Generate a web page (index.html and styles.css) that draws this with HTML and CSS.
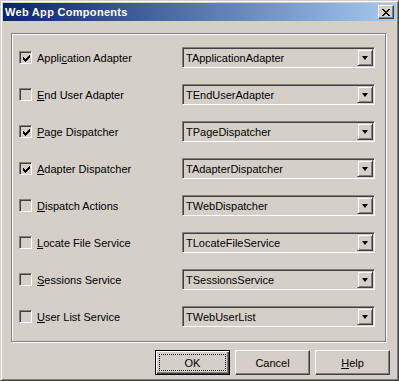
FILE: index.html
```html
<!DOCTYPE html>
<html>
	<head>
		<meta charset="utf-8">
		<title>Web App Components</title>
		<link rel="stylesheet" href="styles.css">
	</head>
	<body>
		<div class="window">
			<!-- 标题栏 -->
			<div class="titlebar">
				<span class="title">Web App Components</span>
				<span class="close">
					<svg width="8" height="7" viewBox="0 0 8 7" shape-rendering="crispEdges"><path d="M0 0h2v1H0z M6 0h2v1H6z M1 1h2v1H1z M5 1h2v1H5z M2 2h4v1H2z M3 3h2v1H3z M2 4h4v1H2z M1 5h2v1H1z M5 5h2v1H5z M0 6h2v1H0z M6 6h2v1H6z" fill="#000"/></svg>
				</span>
			</div>

			<div class="body">
				<!-- 组件列表 -->
				<div class="group">
					<div class="row">
						<span class="check checked"><svg width="7" height="7" viewBox="0 0 7 7" shape-rendering="crispEdges"><path d="M6 0h1v3H6z M5 1h1v3H5z M0 2h1v3H0z M1 3h1v3H1z M4 2h1v3H4z M3 3h1v3H3z M2 4h1v3H2z" fill="#000"/></svg></span>
						<span class="label">Appli<u>c</u>ation Adapter</span>
						<span class="combo"><span class="value">TApplicationAdapter</span><span class="drop"><i class="arrow"></i></span></span>
					</div>
					<div class="row">
						<span class="check"></span>
						<span class="label"><u>E</u>nd User Adapter</span>
						<span class="combo"><span class="value">TEndUserAdapter</span><span class="drop"><i class="arrow"></i></span></span>
					</div>
					<div class="row">
						<span class="check checked"><svg width="7" height="7" viewBox="0 0 7 7" shape-rendering="crispEdges"><path d="M6 0h1v3H6z M5 1h1v3H5z M0 2h1v3H0z M1 3h1v3H1z M4 2h1v3H4z M3 3h1v3H3z M2 4h1v3H2z" fill="#000"/></svg></span>
						<span class="label"><u>P</u>age Dispatcher</span>
						<span class="combo"><span class="value">TPageDispatcher</span><span class="drop"><i class="arrow"></i></span></span>
					</div>
					<div class="row">
						<span class="check checked"><svg width="7" height="7" viewBox="0 0 7 7" shape-rendering="crispEdges"><path d="M6 0h1v3H6z M5 1h1v3H5z M0 2h1v3H0z M1 3h1v3H1z M4 2h1v3H4z M3 3h1v3H3z M2 4h1v3H2z" fill="#000"/></svg></span>
						<span class="label"><u>A</u>dapter Dispatcher</span>
						<span class="combo"><span class="value">TAdapterDispatcher</span><span class="drop"><i class="arrow"></i></span></span>
					</div>
					<div class="row">
						<span class="check"></span>
						<span class="label"><u>D</u>ispatch Actions</span>
						<span class="combo"><span class="value">TWebDispatcher</span><span class="drop"><i class="arrow"></i></span></span>
					</div>
					<div class="row">
						<span class="check"></span>
						<span class="label"><u>L</u>ocate File Service</span>
						<span class="combo"><span class="value">TLocateFileService</span><span class="drop"><i class="arrow"></i></span></span>
					</div>
					<div class="row">
						<span class="check"></span>
						<span class="label"><u>S</u>essions Service</span>
						<span class="combo"><span class="value">TSessionsService</span><span class="drop"><i class="arrow"></i></span></span>
					</div>
					<div class="row">
						<span class="check"></span>
						<span class="label"><u>U</u>ser List Service</span>
						<span class="combo"><span class="value">TWebUserList</span><span class="drop"><i class="arrow"></i></span></span>
					</div>
				</div>

				<!-- 按钮 -->
				<div class="buttons">
					<span class="btn default"><span class="focus">OK</span></span>
					<span class="btn">Cancel</span>
					<span class="btn"><u>H</u>elp</span>
				</div>
			</div>
		</div>
	</body>
</html>
```

FILE: styles.css
```css
*{
	margin: 0;
	padding: 0;
	box-sizing: border-box;
}
body {
	font-family: "Liberation Sans", Arial, sans-serif;
	font-size: 11px;
	color: #000;
	background: #d4d0c8;
}
.window {
	width: 399px;
	height: 381px;
	background: #d4d0c8;
	border: 1px solid;
	border-color: #d4d0c8 #404040 #404040 #d4d0c8;
	box-shadow: inset 1px 1px #fff, inset -1px -1px #808080;
	padding: 2px;
}
.titlebar {
	height: 18px;
	display: flex;
	align-items: center;
	padding-left: 2px;
	background: linear-gradient(to right, #0a246a, #a6caf0);
}
.title {
	flex: 1;
	color: #fff;
	font-weight: bold;
	font-size: 11px;
	letter-spacing: 0.3px;
	line-height: 18px;
}
.close {
	width: 16px;
	height: 14px;
	margin-right: 2px;
	background: #d4d0c8;
	border: 1px solid;
	border-color: #fff #404040 #404040 #fff;
	box-shadow: inset -1px -1px #808080;
	display: flex;
	align-items: center;
	justify-content: center;
}
.close svg {
	display: block;
	margin-left: -1px;
}

.group {
	width: 375px;
	height: 309px;
	margin: 12px 0 0 8px;
	border: 1px solid #808080;
	box-shadow: inset 1px 1px #fff, 1px 1px #fff;
	padding: 13px 10px 14px 7px;
	display: flex;
	flex-direction: column;
	gap: 16px;
}
.row {
	height: 21px;
	display: flex;
	align-items: center;
}
.check {
	width: 13px;
	height: 13px;
	border: 1px solid;
	border-color: #808080 #fff #fff #808080;
	box-shadow: inset 1px 1px #404040, inset -1px -1px #d4d0c8;
	background: #d4d0c8;
	padding: 2px;
}
.check svg {
	display: block;
	margin: 1px 0 0 1px;
}
.label {
	margin-left: 5px;
	flex: 1;
	white-space: nowrap;
}
.combo {
	width: 193px;
	height: 21px;
	border: 1px solid;
	border-color: #808080 #fff #fff #808080;
	box-shadow: inset 1px 1px #404040, inset -1px -1px #d4d0c8;
	padding: 1px;
	display: flex;
	align-items: center;
}
.value {
	flex: 1;
	padding-left: 2px;
	white-space: nowrap;
}
.drop {
	width: 16px;
	height: 17px;
	border: 1px solid;
	border-color: #d4d0c8 #404040 #404040 #d4d0c8;
	box-shadow: inset 1px 1px #fff, inset -1px -1px #808080;
	display: flex;
	align-items: center;
	justify-content: center;
}
.arrow {
	width: 0;
	height: 0;
	border-left: 3.5px solid transparent;
	border-right: 3.5px solid transparent;
	border-top: 4px solid #000;
	margin-left: -1px;
}

.buttons {
	display: flex;
	justify-content: flex-end;
	gap: 5px;
	margin-top: 8px;
	padding-right: 6px;
}
.btn {
	width: 75px;
	height: 25px;
	border: 1px solid;
	border-color: #fff #404040 #404040 #fff;
	box-shadow: inset -1px -1px #808080;
	display: flex;
	align-items: center;
	justify-content: center;
}
.btn.default {
	border-color: #000;
	box-shadow: inset 1px 1px #fff, inset -1px -1px #404040, inset -2px -2px #808080;
	padding: 3px;
}
.focus {
	width: 100%;
	height: 100%;
	border: 1px dotted #000;
	display: flex;
	align-items: center;
	justify-content: center;
}
```
